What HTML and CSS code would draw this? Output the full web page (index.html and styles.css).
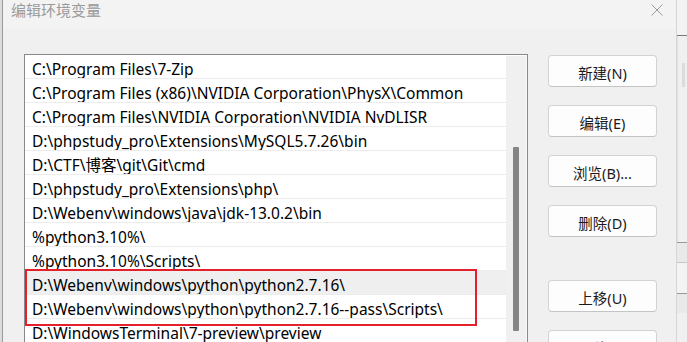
FILE: index.html
```html
<!DOCTYPE html>
<html lang="zh-CN">
<head>
    <meta charset="UTF-8">
    <title>编辑环境变量</title>
    <link rel="stylesheet" href="styles.css">
</head>
<body>
    <div class="screen">
        <!-- window behind, left edge -->
        <div class="behind-left"></div>

        <!-- Edit environment variable dialog -->
        <div class="dialog">
            <div class="titlebar">
                <span class="title">编辑环境变量</span>
                <svg class="close" width="12" height="12" viewBox="0 0 12 12">
                    <path d="M0.5 0.5 L11.5 11.5 M11.5 0.5 L0.5 11.5" stroke="#9a9a9a" stroke-width="1" fill="none"/>
                </svg>
            </div>

            <div class="content">
                <div class="listbox">
                    <div class="rows">
                        <div class="row">C:\Program Files\7-Zip</div>
                        <div class="row">C:\Program Files (x86)\NVIDIA Corporation\PhysX\Common</div>
                        <div class="row">C:\Program Files\NVIDIA Corporation\NVIDIA NvDLISR</div>
                        <div class="row">D:\phpstudy_pro\Extensions\MySQL5.7.26\bin</div>
                        <div class="row">D:\CTF\博客\git\Git\cmd</div>
                        <div class="row">D:\phpstudy_pro\Extensions\php\</div>
                        <div class="row">D:\Webenv\windows\java\jdk-13.0.2\bin</div>
                        <div class="row">%python3.10%\</div>
                        <div class="row">%python3.10%\Scripts\</div>
                        <div class="marked">
                            <div class="row hover">D:\Webenv\windows\python\python2.7.16\</div>
                            <div class="row">D:\Webenv\windows\python\python2.7.16--pass\Scripts\</div>
                        </div>
                        <div class="row">D:\WindowsTerminal\7-preview\preview</div>
                    </div>
                    <div class="scrollbar">
                        <div class="thumb"></div>
                    </div>
                </div>

                <div class="buttons">
                    <button>新建(N)</button>
                    <button>编辑(E)</button>
                    <button>浏览(B)...</button>
                    <button>删除(D)</button>
                    <button class="move-up">上移(U)</button>
                    <button>下移(O)</button>
                </div>
            </div>
        </div>

        <!-- window behind, right edge -->
        <div class="behind-right">
            <div class="br-top"></div>
            <div class="br-mid"><div class="br-thumb"></div></div>
            <div class="br-row"></div>
            <div class="br-row tall"></div>
            <div class="br-row"></div>
        </div>
    </div>
</body>
</html>
```

FILE: styles.css
```css
* { box-sizing: border-box; margin: 0; padding: 0; }
body { width: 687px; height: 342px; overflow: hidden; background: #f0f0f0;
    font-family: "Noto Sans", "Noto Sans CJK SC", sans-serif; }

.screen { display: flex; width: 687px; height: 342px; }

/* Bits of the windows behind the dialog */
.behind-left { width: 2px; flex: none; background: #dcdcdc; }
.behind-right { width: 10px; flex: none; display: flex; flex-direction: column; background: #f0f0f0; }
.br-top { height: 36px; flex: none; background: #f3f3f3; border-bottom: 1px solid #7a7a7a; }
.br-mid { height: 206px; flex: none; border-left: 1px solid #e2e2e2; padding: 27px 0 0 4px; }
.br-thumb { width: 3px; height: 24px; background: #dcdcdc; }
.br-row { height: 20px; flex: none; border-top: 1px solid #9a9a9a; background: #e9e9e9; }
.br-row.tall { height: 31px; border-top: 1px solid #c8c8c8; background: #f3f3f3; }

/* Dialog */
.dialog { flex: none; width: 675px; height: 342px; display: flex; flex-direction: column;
    border-left: 1px solid #9a9a9a; border-right: 1px solid #d6d6d6; background: #f0f0f0; }

.titlebar { height: 29px; flex: none; background: #f3f3f3; display: flex; align-items: flex-start;
    justify-content: space-between; padding: 0 13px 0 8px; }
.title { font-family: "Noto Sans CJK SC", sans-serif; font-size: 15px; line-height: 20px; color: #9a9a9a; }
.close { margin-top: 4px; }

.content { display: flex; padding: 25px 0 0 21px; gap: 20px; }

/* Path list */
.listbox { width: 504px; height: 300px; flex: none; display: flex; background: #fff;
    border: 1px solid #868a8e; border-bottom: none; }
.rows { width: 481px; flex: none; }
.row { height: 24px; padding: 2px 0 0 7px; border-bottom: 1px solid #ececec; font-size: 15.5px; line-height: 24px;
    color: #000; white-space: nowrap; overflow: hidden; }
.row.hover { background: #efefef; }

.marked { position: relative; }
.marked::after { content: ""; position: absolute; left: 0; top: -2px; width: 448px; height: 53px;
    border: 2px solid #e3202b; }

.scrollbar { width: 21px; flex: none; background: #f0f0f0; margin-top: 1px; padding: 91px 0 0 7px;
    border-right: 1px solid #fafafa; }
.thumb { width: 6px; height: 184px; background: #858585; border-radius: 1px; }

/* Buttons */
.buttons { width: 109px; flex: none; display: flex; flex-direction: column; gap: 18px; padding-top: 1px; }
button { height: 32px; flex: none; background: #fdfdfd; border: 1px solid #d3d3d3; border-bottom-color: #c4c4c4;
    border-radius: 4px; font-family: "Noto Sans", "Noto Sans CJK SC", sans-serif; font-size: 14.5px; color: #1a1a1a;
    padding-top: 2px; }
.move-up { margin-top: 25px; }
```
